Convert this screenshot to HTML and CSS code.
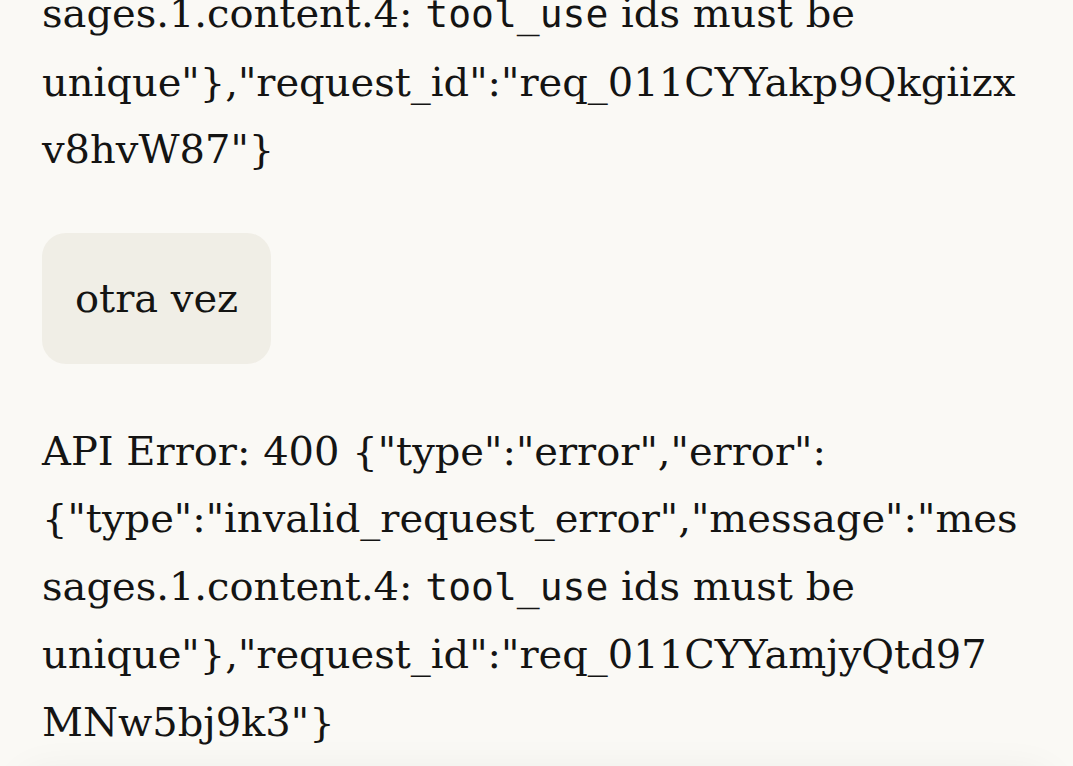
FILE: index.html
```html
<!DOCTYPE html>
<html lang="es">
<head>
<meta charset="utf-8">
<title>Chat</title>
<link rel="stylesheet" href="styles.css">
</head>
<body>
<main class="thread">
  <div class="msg msg-first">
    <span class="line">sages.1.content.4: <code class="code">tool_use</code> ids must be</span>
    <span class="line">unique"},"request_id":"req_011CYYakp9Qkgiizx</span>
    <span class="line">v8hvW87"}</span>
  </div>
  <div class="user-row">
    <div class="bubble">otra vez</div>
  </div>
  <div class="msg">
    <span class="line">API Error: 400 {"type":"error","error":</span>
    <span class="line">{"type":"invalid_request_error","message":"mes</span>
    <span class="line">sages.1.content.4: <code class="code">tool_use</code> ids must be</span>
    <span class="line">unique"},"request_id":"req_011CYYamjyQtd97</span>
    <span class="line">MNw5bj9k3"}</span>
  </div>
</main>
<div class="composer"></div>
</body>
</html>
```

FILE: styles.css
```css
html, body {
  margin: 0;
  padding: 0;
  background: #faf9f5;
  height: 100%;
  overflow: hidden;
}
body {
  color: #141413;
  font-family: "DejaVu Serif", "Liberation Serif", serif;
  font-size: 40px;
}
.thread {
  padding: 0 42px;
  display: flex;
  flex-direction: column;
}
.msg {
  display: flex;
  flex-direction: column;
  line-height: 67.5px;
}
.msg-first {
  margin-top: -20px;
}
.line {
  white-space: nowrap;
  display: block;
}
.code {
  font-family: "DejaVu Sans Mono", monospace;
  font-size: 38px;
}
.user-row {
  display: flex;
  margin: 49px 0 54px;
}
.bubble {
  background: #f0eee6;
  border-radius: 24px;
  padding: 32px 33px;
  line-height: 67px;
}
.composer {
  position: fixed;
  left: 20px;
  right: 20px;
  top: 772px;
  height: 120px;
  border-radius: 24px;
  background: #faf9f5;
  box-shadow: 0 0 40px rgba(0, 0, 0, 0.06);
}
```
